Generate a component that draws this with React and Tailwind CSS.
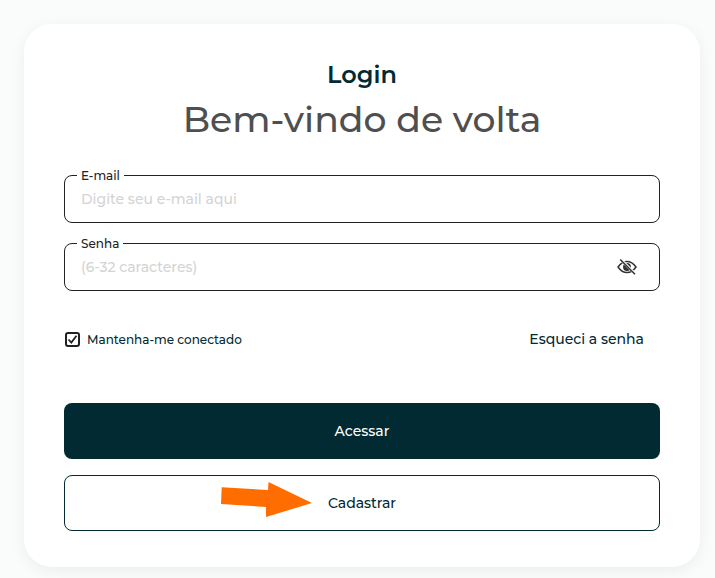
import React from "react";

const font = "font-['Montserrat','Inter','Liberation_Sans',sans-serif]";

const Field = ({ label, placeholder, children }) => (
  <fieldset className="h-[54px] rounded-lg border border-[#222] pt-[7px] pl-4 pr-[22px] flex items-center">
    <legend className="-ml-1 px-1 text-xs font-medium leading-[13px] text-[#222]">{label}</legend>
    <span className="flex-1 text-sm font-medium text-[#d4d4d4]">{placeholder}</span>
    {children}
  </fieldset>
);

const EyeOff = () => (
  <svg width="20" height="16" viewBox="0 0 20 16" fill="none" stroke="#333" strokeWidth="1.5">
    <path d="M1 8c2.5-3.6 5.500-5.600 9-5.600S16.500 4.400 19 8c-2.500 3.600-5.500 5.600-9 5.600S3.500 11.600 1 8Z" />
    <circle cx="10" cy="8" r="3.200" fill="#333" />
    <path d="M3.800 .5 18.300 15" stroke="#fff" strokeWidth="2.800" />
    <path d="M3.200 .5 18 15.300" />
  </svg>
);

export default function App() {
  return (
    <div className={`${font} min-h-[578px] bg-[#fafcfb] pl-6 pr-[15px] pt-6`}>
      <div className="relative h-[543px] rounded-[28px] bg-white px-10 shadow-[0_4px_16px_rgba(0,0,0,0.06)]">
        <div className="pt-[35px] text-center">
          <h2 className="text-2xl leading-8 font-semibold text-[#012a32]">Login</h2>
          <h1 className="mt-1.5 text-[36.2px] leading-[44px] font-medium text-[#504f4f]">Bem-vindo de volta</h1>
        </div>

        <div className="mt-7 flex flex-col gap-3.5">
          <Field label="E-mail" placeholder="Digite seu e-mail aqui" />
          <Field label="Senha" placeholder="(6-32 caracteres)">
            <EyeOff />
          </Field>
        </div>

        <div className="mt-[38px] flex items-center justify-between pr-4">
          <label className="flex items-center gap-[7px] pl-px text-xs font-medium text-[#012a32]">
            <span className="flex size-[15px] items-center justify-center rounded-[3px] border-2 border-[#222]">
              <svg width="11" height="11" viewBox="0 0 11 11" fill="none" stroke="#222" strokeWidth="1.8">
                <path d="M1.500 5.500 4.300 8.500 9.500 1.800" />
              </svg>
            </span>
            <span className="mt-px">Mantenha-me conectado</span>
          </label>
          <span className="text-sm font-medium text-[#012a32]">Esqueci a senha</span>
        </div>

        <div className="mt-[54px] flex flex-col gap-4">
          <button className="h-14 rounded-lg bg-[#012a32] text-sm font-medium text-white">Acessar</button>
          <button className="h-14 rounded-lg border border-[#012a32] bg-white text-sm font-medium text-[#012a32]">Cadastrar</button>
        </div>

        {/* arrow annotation */}
        <svg className="absolute left-[197px] top-[458px]" width="92" height="36" viewBox="0 0 92 36">
          <path d="M.7 5.300 47 8 47.500 0 91 21 45 35V25L0 22Z" fill="#ff6d00" />
        </svg>
      </div>
    </div>
  );
}
